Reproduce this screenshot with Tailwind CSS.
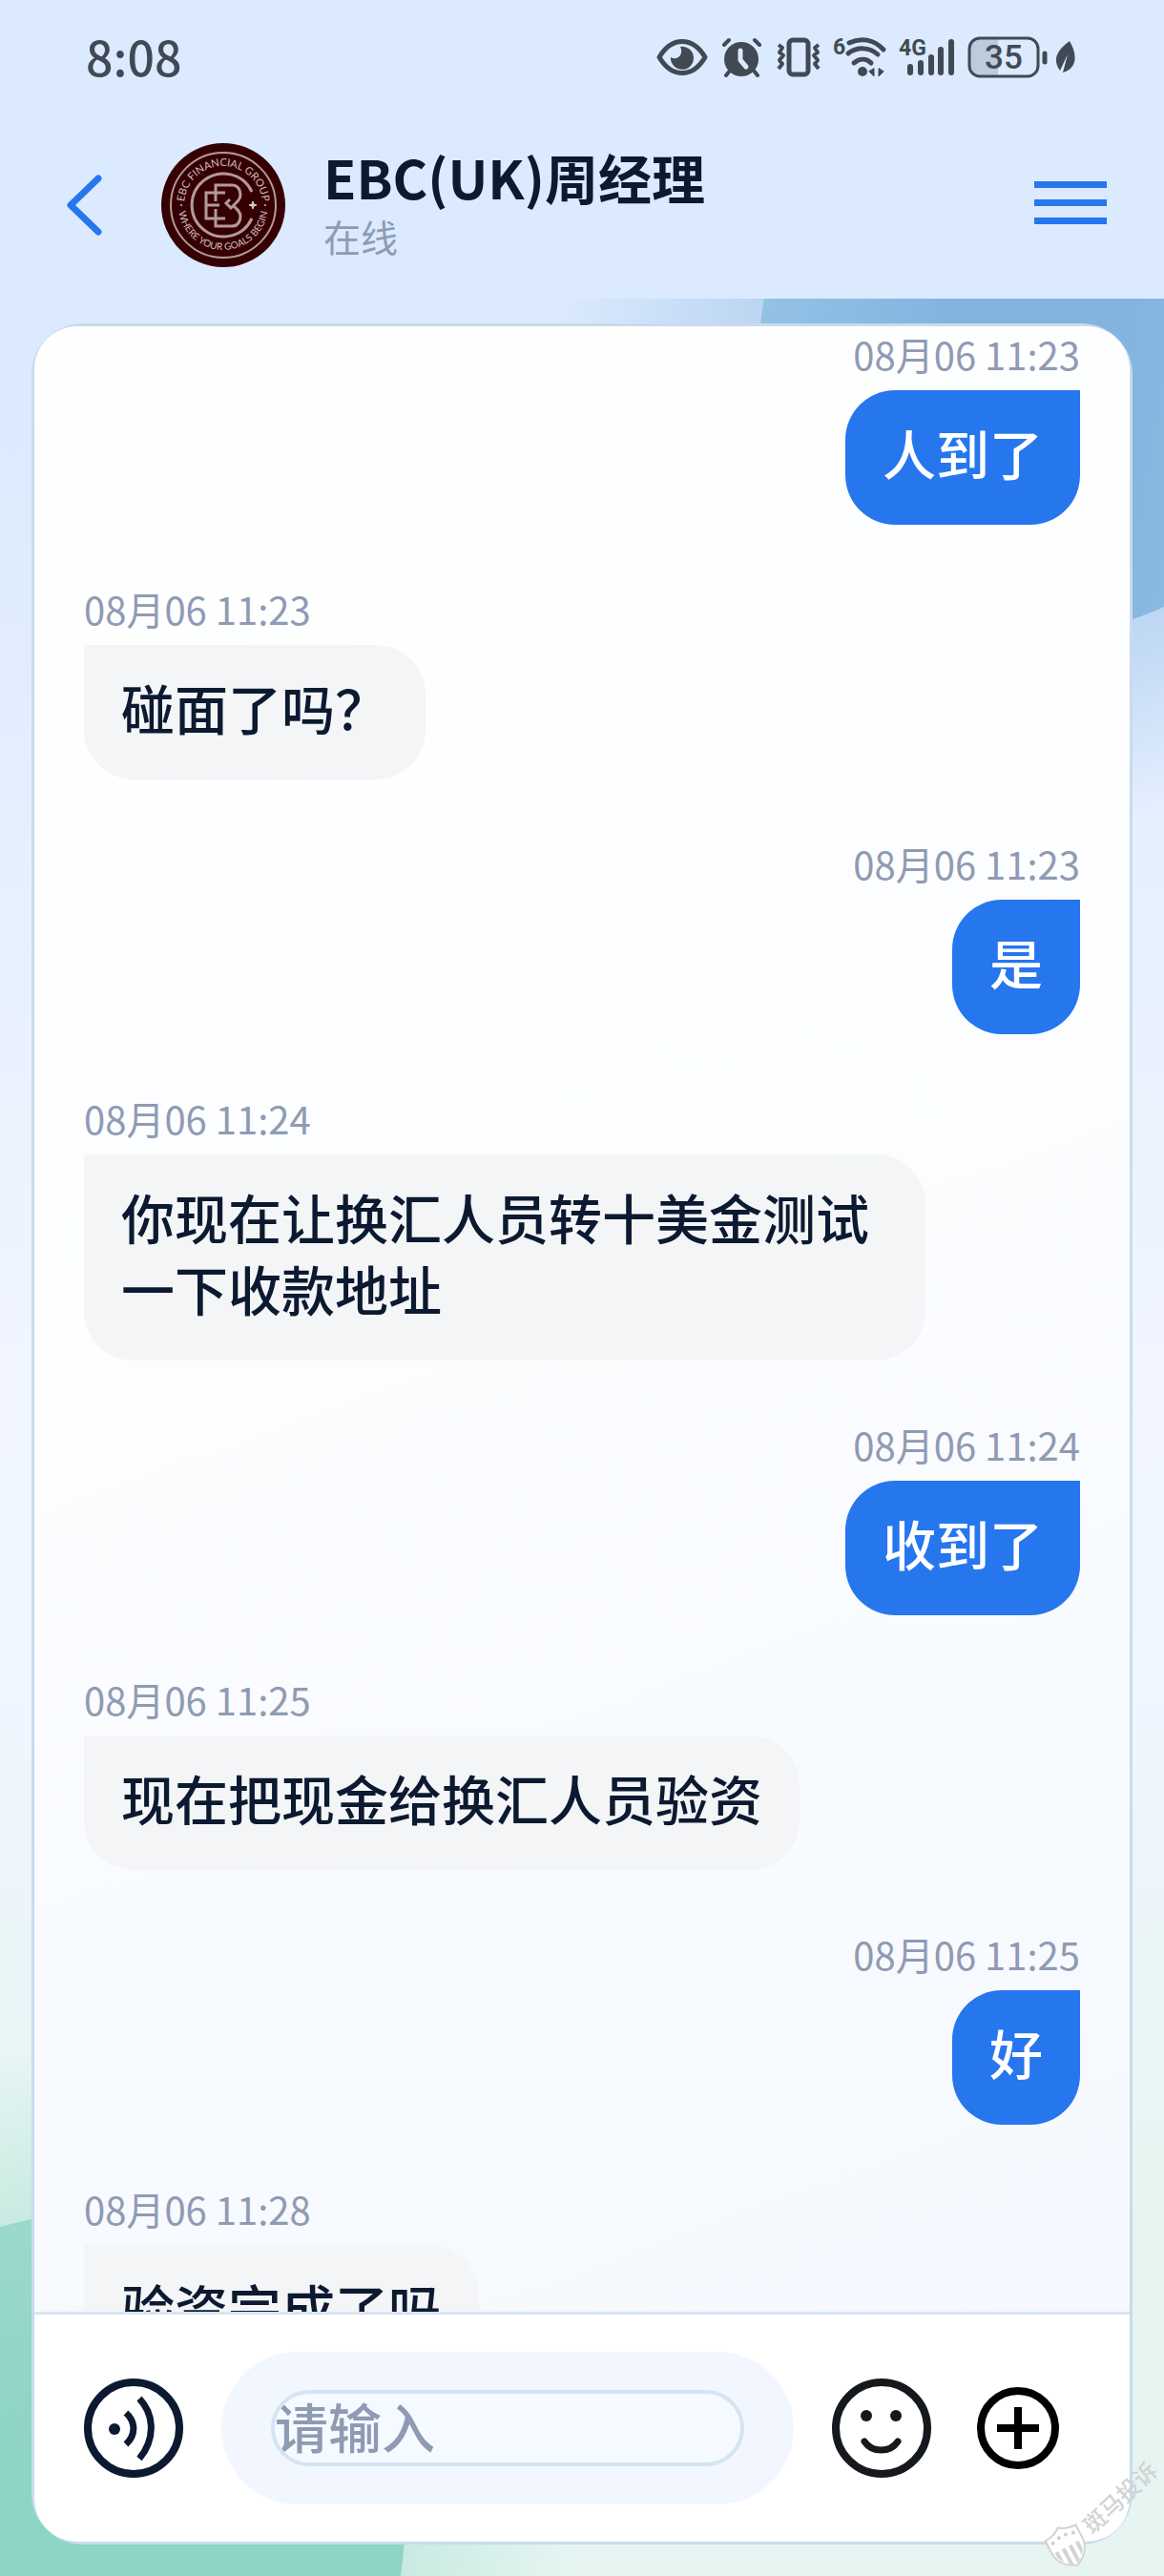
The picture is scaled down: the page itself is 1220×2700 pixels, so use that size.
<!DOCTYPE html>
<html lang="zh-CN">
<head>
    <meta charset="UTF-8">
    <meta name="viewport" content="width=device-width, initial-scale=1.0">
    <title>EBC(UK)周经理</title>
    <script src="https://cdn.jsdelivr.net/npm/@tailwindcss/browser@4"></script>
</head>
<body class="font-['Noto_Sans_CJK_SC',sans-serif] text-[#0b1a30]">
    <div class="relative isolate flex h-screen flex-col overflow-hidden bg-[linear-gradient(180deg,#dbeafe_0%,#dbeafe_14%,#f0f5ff_52%,#f0f6ff_66%,#e6f5f2_84%,#e6f5f2_100%)]">

        <!-- Background shapes -->
        <div class="absolute -top-[242px] -right-[472px] -z-10 size-[1200px] rounded-full bg-[radial-gradient(closest-side,#bcd6f2_50%,#bcd6f200_84%)]"></div>
        <div class="absolute top-[68px] -right-[172px] -z-10 size-[596px] rounded-full bg-[linear-gradient(100deg,#98c5e8_0%,#83b4de_35%,#83b4de_60%,#95c0e5_100%)]"></div>
        <div class="absolute -bottom-[548px] -left-[504px] -z-10 size-[1200px] rounded-full bg-[radial-gradient(closest-side,#c8eae1_54%,#c8eae100_84%)]"></div>
        <div class="absolute -bottom-[276px] -left-[232px] -z-10 size-[656px] rounded-full bg-linear-to-b from-[#9cd8cd] to-[#8ed4c7] to-40%"></div>

        <!-- Status bar -->
        <div class="flex h-[120px] shrink-0 items-center justify-between bg-[#dbeafe] pr-[93px] pl-[90px] text-[#414a54]">
            <span class="pb-1 text-[50px] leading-none font-medium">8:08</span>
            <div class="flex items-center gap-[14px]">
                <svg width="54" height="42" viewBox="0 0 54 42" fill="none">
                    <path d="M3 21C16-1 38-1 51 21C38 43 16 43 3 21Z" stroke="currentColor" stroke-width="5" stroke-linejoin="round"/>
                    <path d="M25 10a12 12 0 1 1-10 11c7 4 14-3 10-11Z" fill="currentColor"/>
                </svg>
                <svg width="43" height="42" viewBox="0 0 43 42" fill="none" stroke="currentColor" stroke-linecap="round">
                    <circle cx="21" cy="23" r="18" fill="currentColor" stroke="none"/>
                    <path d="M3 8l5-5M40 8l-5-5M9 35l-4 5M34 35l4 5" stroke-width="4"/>
                    <path d="M20 14v10l6 7" stroke="#dbeafe" stroke-width="5" stroke-linejoin="round"/>
                </svg>
                <svg width="48" height="42" viewBox="0 0 48 42" fill="none" stroke="currentColor" stroke-linejoin="round">
                    <rect x="14" y="3" width="20" height="36" rx="4" stroke-width="5"/>
                    <path d="M3 8l4 3-3 5 4 3-4 5 3 4-4 5M45 8l-4 3 3 5-4 3 4 5-3 4 4 5" stroke-width="4"/>
                </svg>
                <svg class="overflow-visible" width="54" height="42" viewBox="0 0 54 42" fill="none" stroke="currentColor" stroke-linecap="round">
                    <text x="-2" y="18" font-family="Roboto, sans-serif" font-size="23" font-weight="700" fill="currentColor" stroke="none">6</text>
                    <path d="M15 6c12-6 26-4 36 7" stroke-width="5"/>
                    <path d="M14 17c9-7 22-7 31 1" stroke-width="5"/>
                    <path d="M20 27c6-5 13-5 18 0" stroke-width="5"/>
                    <circle cx="29" cy="36" r="5" fill="currentColor" stroke="none"/>
                    <path d="M41 33v8l-5-5ZM46 33v8l5-5Z" fill="currentColor" stroke-width="1"/>
                </svg>
                <svg class="overflow-visible" width="57" height="42" viewBox="0 0 57 42" fill="none" stroke="currentColor" stroke-linecap="round">
                    <text x="-1" y="19" font-family="Roboto, sans-serif" font-size="23" font-weight="700" fill="currentColor" stroke="none">4G</text>
                    <path d="M11 31v6M22 27v10M33 21v16M43 13v24M54 5v32" stroke-width="6"/>
                </svg>
                <div class="flex items-center gap-2">
                    <svg width="84" height="44" viewBox="0 0 84 44" fill="none">
                        <path d="M12 2h20v40H12a10 10 0 0 1-10-10V12A10 10 0 0 1 12 2Z" fill="#bccbdd"/>
                        <rect x="2" y="2" width="72" height="40" rx="11" stroke="currentColor" stroke-width="3"/>
                        <path d="M81 18v9" stroke="currentColor" stroke-width="5" stroke-linecap="round"/>
                        <text x="38" y="34" font-family="Roboto, sans-serif" font-size="35" font-weight="500" text-anchor="middle" fill="currentColor">35</text>
                    </svg>
                    <svg width="21" height="34" viewBox="0 0 21 34">
                        <path d="M15 0c8 13 8 27-4 32l-3 1 5-19L5 31C-3 20 1 10 15 0Z" fill="currentColor"/>
                    </svg>
                </div>
            </div>
        </div>

        <!-- Chat header -->
        <header class="flex h-[193px] shrink-0 items-center bg-[#dbeafe] pr-[60px] pb-1 pl-[60px]">
            <button type="button" aria-label="返回" class="flex w-14 justify-center">
                <svg width="40" height="68" viewBox="0 0 40 68" fill="none">
                    <path d="M35 6L6 34L35 62" stroke="#2676ee" stroke-width="7" stroke-linecap="round" stroke-linejoin="round"/>
                </svg>
            </button>
            <svg class="ml-[53px] shrink-0" width="130" height="130" viewBox="0 0 130 130" fill="none">
                <defs>
                    <path id="ringTop" d="M24 65a41 41 0 0 1 82 0"/>
                    <path id="ringBottom" d="M18 65a47 47 0 0 0 94 0"/>
                </defs>
                <circle cx="65" cy="65" r="65" fill="#360003"/>
                <g stroke="#b39a98" stroke-width="2">
                    <circle cx="65" cy="65" r="55"/>
                    <path d="M95 51A33 33 0 1 0 95 79" stroke-width="3"/>
                    <path d="M57 61V44h17c9 0 12 12 5 18l-6 6-5-5 4-4M57 69v18h17c9 0 12-12 5-18l-4-4" stroke-width="3"/>
                    <path d="M67 52H47v27h20M47 65h14" stroke-width="3"/>
                </g>
                <path d="M96 61l1 3 3 1-3 1-1 3-1-3-3-1 3-1Z" fill="#d8cbc8" stroke="#d8cbc8"/>
                <g fill="#d0bfbd" font-family="Lato, sans-serif">
                    <text font-size="11" text-anchor="middle"><textPath href="#ringTop" startOffset="50%">EBC FINANCIAL GROUP</textPath></text>
                    <text font-size="10" text-anchor="middle"><textPath href="#ringBottom" startOffset="50%">WHERE YOUR GOALS BEGIN</textPath></text>
                    <circle cx="21" cy="65" r="1"/>
                    <circle cx="109" cy="65" r="1"/>
                </g>
            </svg>
            <div class="ml-10 min-w-0 flex-1 pb-2">
                <h1 class="text-[56px] leading-[72px] font-bold whitespace-nowrap">EBC(UK)周经理</h1>
                <p class="text-[39px] leading-[52px] text-[#8f9bb3]">在线</p>
            </div>
            <button type="button" aria-label="菜单" class="flex w-[76px] flex-col gap-3 pb-1">
                <span class="h-[7px] bg-[#2676ee]"></span>
                <span class="h-[7px] bg-[#2676ee]"></span>
                <span class="h-[7px] bg-[#2676ee]"></span>
            </button>
        </header>

        <!-- Chat card -->
        <main class="mx-[33px] mt-[26px] mb-[33px] flex min-h-0 flex-1 flex-col rounded-[54px] border-3 border-[#c9dbec]">
            <ul class="flex min-h-0 flex-1 flex-col gap-[62px] overflow-y-auto rounded-t-[45px] bg-linear-160 from-white via-[#fbfdff] to-[#f5f8fe] px-[52px] pt-[3px] [scrollbar-width:none]">
                <li class="flex shrink-0 flex-col items-end gap-3">
                    <time class="text-[40px] leading-[52px] text-[#8f9bb3]">08月06 11:23</time>
                    <p class="max-w-[882px] rounded-[52px] rounded-tr-none bg-[#2676ee] px-[39px] pt-[27px] pb-[39px] text-[56px] leading-[75px] font-medium text-white">人到了</p>
                </li>
                <li class="flex shrink-0 flex-col items-start gap-3">
                    <time class="text-[40px] leading-[52px] text-[#8f9bb3]">08月06 11:23</time>
                    <p class="max-w-[882px] rounded-[52px] rounded-tl-none bg-[#f4f5f7] px-[39px] pt-[27px] pb-[39px] text-[56px] leading-[75px] font-medium">碰面了吗？</p>
                </li>
                <li class="flex shrink-0 flex-col items-end gap-3">
                    <time class="text-[40px] leading-[52px] text-[#8f9bb3]">08月06 11:23</time>
                    <p class="max-w-[882px] rounded-[52px] rounded-tr-none bg-[#2676ee] px-[39px] pt-[27px] pb-[39px] text-[56px] leading-[75px] font-medium text-white">是</p>
                </li>
                <li class="flex shrink-0 flex-col items-start gap-3">
                    <time class="text-[40px] leading-[52px] text-[#8f9bb3]">08月06 11:24</time>
                    <p class="max-w-[882px] rounded-[52px] rounded-tl-none bg-[#f4f5f7] px-[39px] pt-[27px] pb-[39px] text-[56px] leading-[75px] font-medium">你现在让换汇人员转十美金测试一下收款地址</p>
                </li>
                <li class="flex shrink-0 flex-col items-end gap-3">
                    <time class="text-[40px] leading-[52px] text-[#8f9bb3]">08月06 11:24</time>
                    <p class="max-w-[882px] rounded-[52px] rounded-tr-none bg-[#2676ee] px-[39px] pt-[27px] pb-[39px] text-[56px] leading-[75px] font-medium text-white">收到了</p>
                </li>
                <li class="flex shrink-0 flex-col items-start gap-3">
                    <time class="text-[40px] leading-[52px] text-[#8f9bb3]">08月06 11:25</time>
                    <p class="max-w-[882px] rounded-[52px] rounded-tl-none bg-[#f4f5f7] px-[39px] pt-[27px] pb-[39px] text-[56px] leading-[75px] font-medium">现在把现金给换汇人员验资</p>
                </li>
                <li class="flex shrink-0 flex-col items-end gap-3">
                    <time class="text-[40px] leading-[52px] text-[#8f9bb3]">08月06 11:25</time>
                    <p class="max-w-[882px] rounded-[52px] rounded-tr-none bg-[#2676ee] px-[39px] pt-[27px] pb-[39px] text-[56px] leading-[75px] font-medium text-white">好</p>
                </li>
                <li class="flex shrink-0 flex-col items-start gap-3">
                    <time class="text-[40px] leading-[52px] text-[#8f9bb3]">08月06 11:28</time>
                    <p class="max-w-[882px] rounded-[52px] rounded-tl-none bg-[#f4f5f7] px-[39px] pt-[27px] pb-[39px] text-[56px] leading-[75px] font-medium">验资完成了吗</p>
                </li>
            </ul>

            <!-- Message input -->
            <form class="flex shrink-0 items-center gap-10 rounded-b-[45px] border-t-3 border-[#d8e4f1] bg-white py-[39px] pr-16 pl-[52px]">
                <button type="button" aria-label="语音" class="shrink-0">
                    <svg width="104" height="104" viewBox="0 0 104 104" fill="none" stroke="#0b1a30">
                        <circle cx="52" cy="52" r="48" stroke-width="8"/>
                        <circle cx="32" cy="53" r="6" fill="#0b1a30" stroke="none"/>
                        <path d="M44 36c10 9 11 23 0 33M58 21c17 18 16 44 0 63" stroke-width="7"/>
                    </svg>
                </button>
                <div class="flex min-w-0 flex-1 rounded-full bg-[#f2f7ff] px-[52px] py-10">
                    <input type="text" aria-label="消息" placeholder="请输入" class="h-20 w-full min-w-0 rounded-full border-4 border-[#d4e4f2] bg-[#f4faff] pb-2 text-[56px] leading-[72px] font-medium outline-none placeholder:text-[#8f9bb3]">
                </div>
                <button type="button" aria-label="表情" class="shrink-0">
                    <svg width="104" height="104" viewBox="0 0 104 104" fill="none" stroke="#15191d">
                        <circle cx="52" cy="52" r="48" stroke-width="8"/>
                        <circle cx="36" cy="39" r="6" fill="#15191d" stroke="none"/>
                        <circle cx="67" cy="39" r="6" fill="#15191d" stroke="none"/>
                        <path d="M34 66c8 12 27 12 35 0" stroke-width="7" stroke-linecap="round"/>
                    </svg>
                </button>
                <button type="button" aria-label="更多" class="shrink-0">
                    <svg width="104" height="104" viewBox="0 0 104 104" fill="none" stroke="#000" stroke-width="8">
                        <circle cx="51" cy="52" r="39"/>
                        <path d="M51 30v44M29 52h44"/>
                    </svg>
                </button>
            </form>
        </main>

        <!-- Watermark -->
        <svg class="pointer-events-none absolute right-0 bottom-0" width="140" height="140" viewBox="0 0 140 140" fill="none">
            <g transform="translate(39 109) rotate(-43)">
                <path d="M-18-16C-10-16-5-18 0-22C5-18 10-16 18-16V-2C18 10 10 18 0 22C-10 18-18 10-18-2Z" transform="rotate(15)" fill="#fff" stroke="#d3d3d3" stroke-width="2"/>
                <path d="M-15 0v6l4 7V0ZM-7 0v17l4 3V0ZM1 0v20l4-2V0ZM9 0v15l4-6V0Z" transform="rotate(15)" fill="#d3d3d3"/>
                <g transform="rotate(15)" fill="#cfcfcf">
                    <circle cx="-12" cy="-10" r="2"/>
                    <circle cx="-4" cy="-12" r="2"/>
                    <circle cx="4" cy="-12" r="2"/>
                    <circle cx="12" cy="-10" r="2"/>
                </g>
                <text x="27" y="9" font-size="24" font-weight="500" fill="#d0d3d3">斑马投诉</text>
            </g>
        </svg>
    </div>
</body>
</html>
